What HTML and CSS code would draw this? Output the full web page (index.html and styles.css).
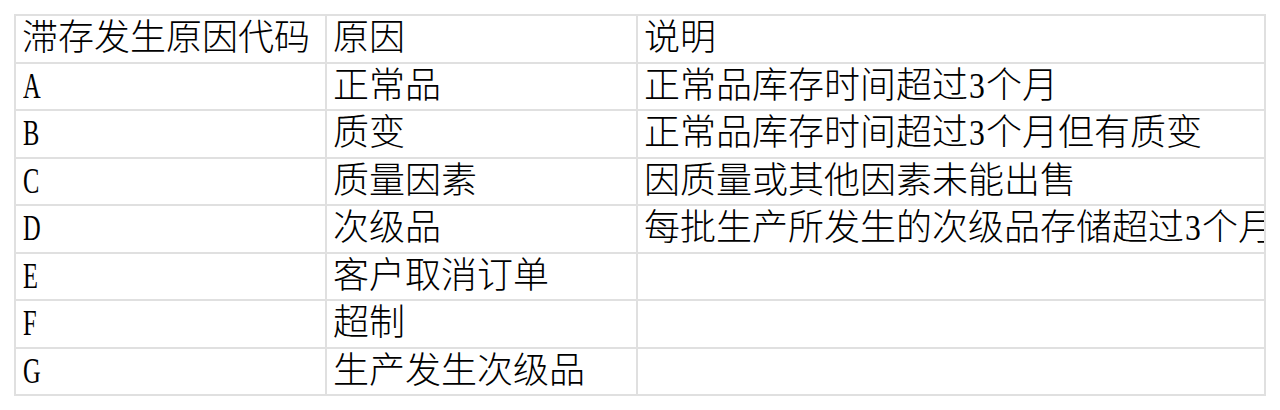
FILE: index.html
```html
<!DOCTYPE html>
<html lang="zh-CN">
<head>
<meta charset="utf-8">
<link rel="stylesheet" href="styles.css">
</head>
<body>
<div class="sheet">
  <div class="cell">滞存发生原因代码</div><div class="cell">原因</div><div class="cell">说明</div>
  <div class="cell"><span class="code">A</span></div><div class="cell">正常品</div><div class="cell">正常品库存时间超过<span class="num">3</span>个月</div>
  <div class="cell"><span class="code">B</span></div><div class="cell">质变</div><div class="cell">正常品库存时间超过<span class="num">3</span>个月但有质变</div>
  <div class="cell"><span class="code">C</span></div><div class="cell">质量因素</div><div class="cell">因质量或其他因素未能出售</div>
  <div class="cell"><span class="code">D</span></div><div class="cell">次级品</div><div class="cell">每批生产所发生的次级品存储超过<span class="num">3</span>个月</div>
  <div class="cell"><span class="code">E</span></div><div class="cell">客户取消订单</div><div class="cell"></div>
  <div class="cell"><span class="code">F</span></div><div class="cell">超制</div><div class="cell"></div>
  <div class="cell"><span class="code">G</span></div><div class="cell">生产发生次级品</div><div class="cell"></div>
</div>
</body>
</html>
```

FILE: styles.css
```css
html, body {
  margin: 0;
  padding: 0;
  background: #ffffff;
}
body {
  padding: 14px 0 0 14px;
  font-family: "Liberation Serif", "Noto Sans CJK SC", serif;
  font-size: 36px;
  font-weight: 300;
  color: #000000;
}
.sheet {
  display: inline-grid;
  grid-template-columns: 309px 309px 626px;
  grid-auto-rows: 45.5px;
  gap: 2px;
  padding: 2px;
  background: #e0e0e0;
}
.cell {
  background: #ffffff;
  padding-left: 6px;
  white-space: nowrap;
  overflow: hidden;
  line-height: 45.5px;
}
.code {
  display: inline-block;
  transform: scaleX(0.68);
  transform-origin: left center;
  margin-left: 1px;
}
.num {
  display: inline-block;
  width: 18px;
  transform: scaleX(0.88);
  transform-origin: center center;
}
```
